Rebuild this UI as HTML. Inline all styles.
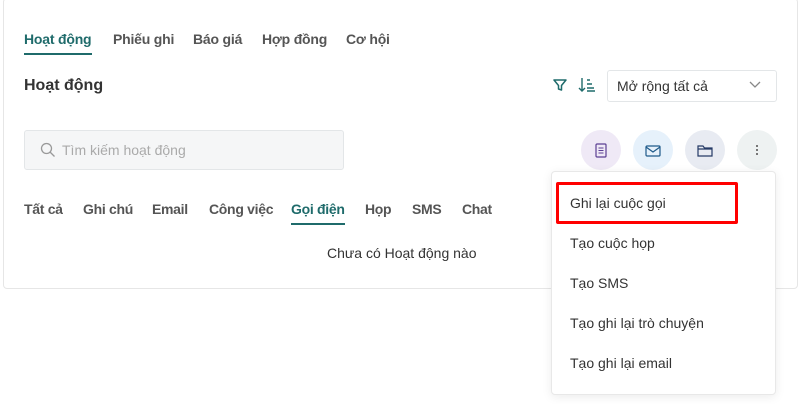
<!DOCTYPE html>
<html><head><meta charset="utf-8"><style>
*{margin:0;padding:0;box-sizing:border-box}
body{width:804px;height:404px;background:#fff;font-family:"Liberation Sans",sans-serif;position:relative;overflow:hidden;color:#333}
.a{position:absolute;white-space:nowrap}
.card{position:absolute;left:3px;top:-2px;width:795px;height:291px;border:1px solid #e6e6e6;border-radius:4px}
.t{font-size:14px;font-weight:bold;color:#555;top:31px;letter-spacing:-0.2px}
.f{font-size:14px;font-weight:bold;color:#555;top:201px;letter-spacing:-0.3px}
.c{position:absolute;top:130px;width:40px;height:40px;border-radius:50%}
.mi{position:absolute;left:570px;font-size:14px;color:#333}
</style></head><body>
<div class="card"></div>
<div class="a t" style="left:24px;color:#1f6b6b">Hoạt động</div>
<div class="a" style="left:24px;top:53px;width:68px;height:2px;background:#1f6b6b"></div>
<div class="a t" style="left:113px">Phiếu ghi</div>
<div class="a t" style="left:193px">Báo giá</div>
<div class="a t" style="left:262px">Hợp đồng</div>
<div class="a t" style="left:346px">Cơ hội</div>
<div class="a" style="left:24px;top:77px;font-size:16px;font-weight:bold;color:#333">Hoạt động</div>
<svg class="a" style="left:553px;top:78px" width="14" height="14" viewBox="0 0 14 14"><path d="M1 2h12L8.5 7.5V12L5.5 11V7.5Z" fill="none" stroke="#1f6b6b" stroke-width="1.5" stroke-linejoin="round"/></svg>
<svg class="a" style="left:578px;top:77px" width="18" height="16" viewBox="0 0 18 16"><path d="M4 1v13M1 11l3 3 3-3M9 3h3M9 7h5M9 11h7M9 14h8" fill="none" stroke="#1f6b6b" stroke-width="1.4"/></svg>
<div class="a" style="left:607px;top:70px;width:170px;height:32px;border:1px solid #e3e6e8;border-radius:3px"></div>
<div class="a" style="left:617px;top:78px;font-size:14px;color:#333">Mở rộng tất cả</div>
<svg class="a" style="left:749px;top:81px" width="12" height="8" viewBox="0 0 12 8"><path d="M1 1l5 5 5-5" fill="none" stroke="#888" stroke-width="1.3"/></svg>
<div class="a" style="left:24px;top:130px;width:320px;height:40px;background:#f5f6f7;border:1px solid #e3e6e8;border-radius:3px"></div>
<svg class="a" style="left:40px;top:142px" width="16" height="16" viewBox="0 0 16 16"><circle cx="6.5" cy="6.5" r="5" fill="none" stroke="#999" stroke-width="1.3"/><path d="M10 10l4.5 4.5" stroke="#999" stroke-width="1.3"/></svg>
<div class="a" style="left:62px;top:142px;font-size:14px;color:#aaa">Tìm kiếm hoạt động</div>
<div class="c" style="left:581px;background:#efe9f6"></div>
<svg class="a" style="left:595px;top:143px" width="12" height="15" viewBox="0 0 12 15"><rect x="1" y="1" width="10" height="13" rx="1" fill="none" stroke="#5b3f93" stroke-width="1.2"/><path d="M3.5 5h5M3.5 7.5h5M3.5 10h5" stroke="#5b3f93" stroke-width="1"/></svg>
<div class="c" style="left:633px;background:#e6f1fb"></div>
<svg class="a" style="left:645px;top:145px" width="16" height="12" viewBox="0 0 16 12"><rect x="1" y="1" width="14" height="10" rx="1" fill="none" stroke="#1e5a8a" stroke-width="1.2"/><path d="M1 2l7 5 7-5" fill="none" stroke="#1e5a8a" stroke-width="1.2"/></svg>
<div class="c" style="left:685px;background:#e8ebf2"></div>
<svg class="a" style="left:697px;top:144px" width="16" height="13" viewBox="0 0 16 13"><path d="M1 2h5l1.5 2H15v8H1Z M1 5h14" fill="none" stroke="#253a66" stroke-width="1.2"/></svg>
<div class="c" style="left:737px;background:#eef2f2"></div>
<div class="a" style="left:756px;top:145px;width:2px;height:2px;background:#777;box-shadow:0 4px #777,0 8px #777"></div>
<div class="a f" style="left:24px">Tất cả</div>
<div class="a f" style="left:83px">Ghi chú</div>
<div class="a f" style="left:152px">Email</div>
<div class="a f" style="left:209px">Công việc</div>
<div class="a f" style="left:291px;color:#1f6b6b">Gọi điện</div>
<div class="a" style="left:291px;top:223px;width:54px;height:2px;background:#1f6b6b"></div>
<div class="a f" style="left:365px">Họp</div>
<div class="a f" style="left:412px">SMS</div>
<div class="a f" style="left:462px">Chat</div>
<div class="a" style="left:327px;top:245px;font-size:14px;color:#333">Chưa có Hoạt động nào</div>
<div class="a" style="left:551px;top:171px;width:225px;height:224px;background:#fff;border:1px solid #e8e8e8;border-radius:4px;box-shadow:0 2px 10px rgba(0,0,0,.08)"></div>
<div class="a" style="left:556px;top:182px;width:182px;height:42px;border:3px solid #f00;border-radius:2px"></div>
<div class="mi" style="top:195px">Ghi lại cuộc gọi</div>
<div class="mi" style="top:235px">Tạo cuộc họp</div>
<div class="mi" style="top:275px">Tạo SMS</div>
<div class="mi" style="top:315px">Tạo ghi lại trò chuyện</div>
<div class="mi" style="top:355px">Tạo ghi lại email</div>
</body></html>
